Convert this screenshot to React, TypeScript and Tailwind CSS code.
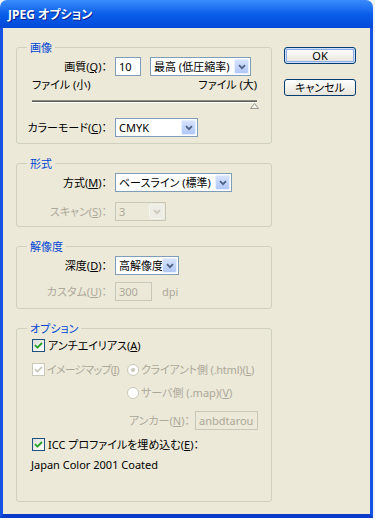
import React from "react";

const labelCls = "w-[91px] shrink-0 text-right pr-[1px]";

function Key({ c }: { c: string }) {
  return <span className="underline underline-offset-[1px]">{c}</span>;
}

function Chevron({ disabled }: { disabled?: boolean }) {
  return (
    <svg width="8" height="6" viewBox="0 0 8 6">
      <path d="M1 1.2 L4 4.2 L7 1.2" fill="none" stroke={disabled ? "#C9C7BA" : "#4D6185"} strokeWidth="1.8" />
    </svg>
  );
}

function Select({ value, className, disabled }: { value: string; className: string; disabled?: boolean }) {
  return (
    <div
      className={`flex h-[19px] shrink-0 items-center border p-[1px] ${className} ${
        disabled ? "border-[#C9C7BA] bg-[#ECE9D8] text-[#ACA899]" : "border-[#7F9DB9] bg-white text-black"
      }`}
    >
      <span className="flex-1 overflow-hidden whitespace-nowrap pl-[2px]">{value}</span>
      <span
        className={`flex h-full w-[15px] items-center justify-center rounded-[2px] border ${
          disabled ? "border-[#F4F3EE] bg-[#EEEDE5]" : "border-[#E6EEFF] bg-gradient-to-b from-[#D6E3FE] to-[#B2C7F6]"
        }`}
      >
        <Chevron disabled={disabled} />
      </span>
    </div>
  );
}

function Input({ value, className, disabled }: { value: string; className: string; disabled?: boolean }) {
  return (
    <div
      className={`flex h-[19px] shrink-0 items-center border pl-[3px] ${className} ${
        disabled ? "border-[#C9C7BA] bg-[#ECE9D8] text-[#ACA899]" : "border-[#7F9DB9] bg-white text-black"
      }`}
    >
      {value}
    </div>
  );
}

function Check({ disabled }: { disabled?: boolean }) {
  return (
    <span
      className={`flex h-[13px] w-[13px] shrink-0 items-center justify-center border ${
        disabled ? "border-[#CAC8BB] bg-white" : "border-[#1C5180] bg-gradient-to-br from-[#DCDCD7] to-white"
      }`}
    >
      <svg width="9" height="9" viewBox="0 0 9 9">
        <path d="M1 4.2 L3.4 6.6 L8 2" fill="none" stroke={disabled ? "#CAC8BB" : "#21A121"} strokeWidth="1.8" />
      </svg>
    </span>
  );
}

function Radio({ checked }: { checked?: boolean }) {
  return (
    <span className="flex h-[12px] w-[12px] shrink-0 items-center justify-center rounded-full border border-[#CAC8BB] bg-white">
      {checked && <span className="h-[4px] w-[4px] rounded-full bg-[#CAC8BB]" />}
    </span>
  );
}

function Group({ title, className, children }: { title: string; className?: string; children: React.ReactNode }) {
  return (
    <fieldset className={`m-0 rounded-[3px] border border-[#D0D0BF] p-0 ${className ?? ""}`}>
      <legend className="ml-[10px] px-[3px] leading-[13px] text-[#0046D5]">{title}</legend>
      {children}
    </fieldset>
  );
}

export default function App() {
  return (
    <div className="h-[518px] w-[375px] bg-[#F2F2F2] font-['Noto_Sans','Noto_Sans_CJK_JP',sans-serif] text-[11px] leading-[13px] text-black [font-feature-settings:'palt']">
      <div className="flex h-full w-[373px] flex-col">
        {/* Title bar */}
        <div className="flex h-[28px] shrink-0 items-center rounded-t-[7px] bg-gradient-to-b from-[#3A8CFC] via-[#0A5EEA] to-[#0348D8] pl-[8px]">
          <span className="text-[12px] font-bold text-white [text-shadow:1px_1px_0_#0A1E8C]">JPEG オプション</span>
        </div>

        {/* Body */}
        <div className="flex flex-1 items-start border-x-[3px] border-b-[4px] border-x-[#1553E2] border-b-[#0A3BC8] bg-[#ECE9D8] pl-[13px] pt-[13px]">
          <div className="flex w-[256px] flex-col gap-[13px]">
            <Group title="画像" className="pb-[6px]">
              <div className="mt-[3px] flex items-center">
                <span className={labelCls}>
                  画質(<Key c="Q" />)：
                </span>
                <Input value="10" className="ml-[7px] w-[26px]" />
                <Select value="最高 (低圧縮率)" className="ml-[9px] w-[101px]" />
              </div>
              <div className="mt-[2px] flex justify-between pl-[15px] pr-[14px]">
                <span>ファイル (小)</span>
                <span>ファイル (大)</span>
              </div>
              <div className="ml-[15px] mr-[14px] mt-[9px] h-[3px] border-b border-t border-b-white border-t-[#8A8A80] bg-[#5F5F5A]" />
              <div className="flex justify-end pr-[12px]">
                <svg width="9" height="6" viewBox="0 0 9 6">
                  <path d="M4.5 0.5 L8.5 5.5 L0.5 5.5 Z" fill="#F4F3EE" stroke="#9A9A90" strokeWidth="1" />
                </svg>
              </div>
              <div className="mt-[9px] flex items-center">
                <span className={labelCls}>
                  カラーモード(<Key c="C" />)：
                </span>
                <Select value="CMYK" className="ml-[7px] w-[83px]" />
              </div>
            </Group>

            <Group title="形式" className="pb-[5px]">
              <div className="mt-[3px] flex items-center">
                <span className={labelCls}>
                  方式(<Key c="M" />)：
                </span>
                <Select value="ベースライン (標準)" className="ml-[7px] w-[117px]" />
              </div>
              <div className="mt-[10px] flex items-center text-[#ACA899]">
                <span className={labelCls}>
                  スキャン(<Key c="S" />)：
                </span>
                <Select value="3" className="ml-[7px] w-[51px]" disabled />
              </div>
            </Group>

            <Group title="解像度" className="pb-[7px]">
              <div className="mt-[3px] flex items-center">
                <span className={labelCls}>
                  深度(<Key c="D" />)：
                </span>
                <Select value="高解像度" className="ml-[7px] w-[64px]" />
              </div>
              <div className="mt-[7px] flex items-center text-[#ACA899]">
                <span className={labelCls}>
                  カスタム(<Key c="U" />)：
                </span>
                <Input value="300" className="ml-[7px] w-[37px]" disabled />
                <span className="ml-[10px]">dpi</span>
              </div>
            </Group>

            <Group title="オプション" className="pb-[30px]">
              <div className="mt-[4px] flex items-center gap-[3px] pl-[15px]">
                <Check />
                <span>
                  アンチエイリアス(<Key c="A" />)
                </span>
              </div>
              <div className="mt-[11px] flex items-center whitespace-nowrap pl-[15px] text-[#ACA899]">
                <span className="flex w-[95px] shrink-0 items-center gap-[2px]">
                  <Check disabled />
                  <span className="tracking-[-0.8px]">
                    イメージマップ(<Key c="I" />)
                  </span>
                </span>
                <span className="flex items-center gap-[2px]">
                  <Radio checked />
                  <span className="tracking-[-0.2px]">
                    クライアント側 (.html)(<Key c="L" />)
                  </span>
                </span>
              </div>
              <div className="mt-[10px] flex items-center gap-[2px] whitespace-nowrap pl-[110px] text-[#ACA899]">
                <Radio />
                <span>
                  サーバ側 (.map)(<Key c="V" />)
                </span>
              </div>
              <div className="mt-[12px] flex items-center justify-end pr-[13px] text-[#ACA899]">
                <span>
                  アンカー(<Key c="N" />)：
                </span>
                <Input value="anbdtarou" className="ml-[5px] w-[63px]" disabled />
              </div>
              <div className="mt-[8px] flex items-center gap-[3px] pl-[15px]">
                <Check />
                <span>
                  ICC プロファイルを埋め込む(<Key c="E" />)：
                </span>
              </div>
              <div className="mt-[7px] pl-[14px]">Japan Color 2001 Coated</div>
            </Group>
          </div>

          {/* Buttons */}
          <div className="ml-[12px] flex flex-col gap-[15px] pt-[6px]">
            <button className="h-[17px] w-[72px] rounded-[3px] border border-[#003C74] bg-gradient-to-b from-white to-[#E6E4DA] leading-[13px] shadow-[inset_0_0_0_1px_#CEE0FC,inset_0_0_0_2px_#8CADE8]">
              OK
            </button>
            <button className="h-[17px] w-[72px] rounded-[3px] border border-[#003C74] bg-gradient-to-b from-white to-[#E6E4DA] leading-[13px]">
              キャンセル
            </button>
          </div>
        </div>
      </div>
    </div>
  );
}
